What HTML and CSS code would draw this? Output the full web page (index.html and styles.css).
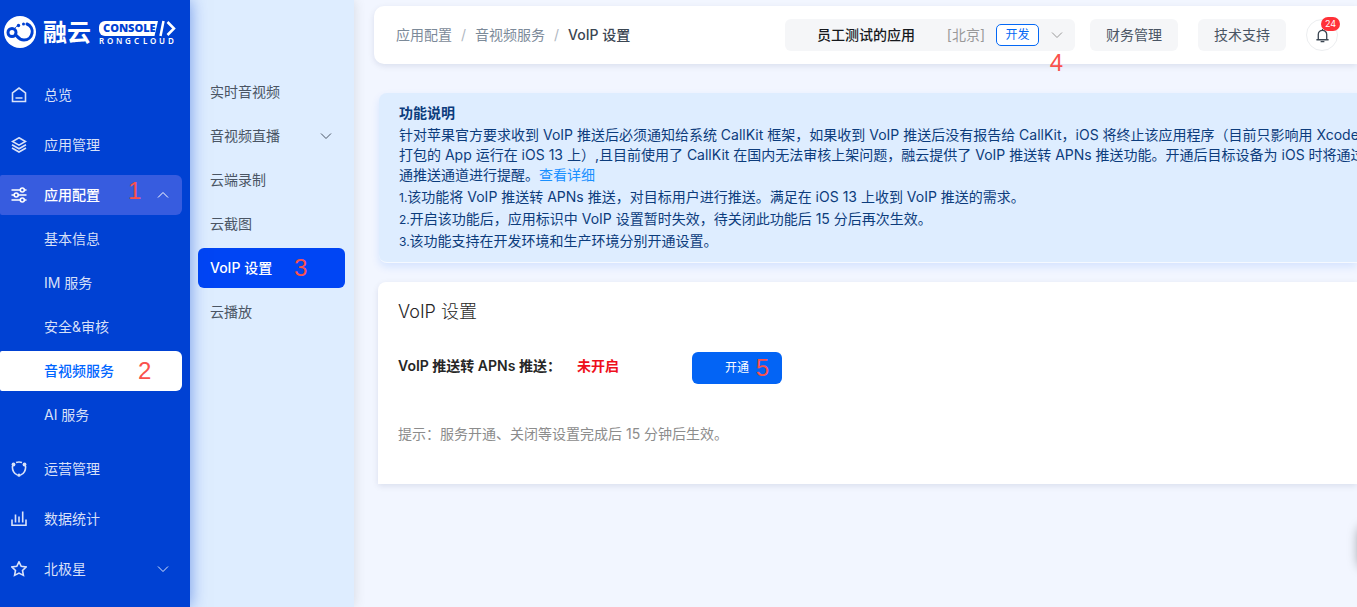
FILE: index.html
```html
<!DOCTYPE html>
<html lang="zh-CN">

<head>
	<meta charset="utf-8">
	<meta name="viewport" content="width=device-width, initial-scale=1">
	<title>VoIP 设置</title>
	<link rel="stylesheet" href="styles.css">
</head>

<body>
	<div class="layout">
		<aside class="sidebar">
			<a class="logo" href="#">
				<svg width="184" height="40" viewBox="0 0 184 40">
					<circle cx="20" cy="20" r="16" fill="#fff" />
					<g fill="none" stroke="#0041d3" stroke-linecap="round">
						<circle cx="12" cy="20.500" r="4" stroke-width="3" />
						<path d="M15.500 22.500c2 2 3.500 5.500 8.500 5.500a8.300 8.300 0 0 0 3-16" stroke-width="3" />
						<path d="M14.500 16.500c1.500-1.500 2.500-2.500 3.500-3.300" stroke-width="1" />
					</g>
					<circle cx="18.500" cy="13.500" r="1.700" fill="#0041d3" />
					<circle cx="23.500" cy="12" r="1.500" fill="#0041d3" />
					<text class="logo-name" x="43" y="29">融云</text>
					<path d="M105 9h53l-3.500 15H105a6 6 0 0 1-6-6v-3a6 6 0 0 1 6-6z" fill="#fff" />
					<text class="logo-console" x="103" y="20">CONSOLE</text>
					<path d="M163.500 9l-3 15M167.500 10l6.500 6.500-6.500 6.500" fill="none" stroke="#fff" stroke-width="2.500" />
					<text class="logo-en" x="99 107 116 125 134 143 150 159 168" y="32">RONGCLOUD</text>
				</svg>
			</a>

			<ul class="menu">
				<li>
					<a class="menu-item" href="#">
						<svg class="icon" viewBox="0 0 16 16"><path d="M1.500 5.800L8 1l6.500 4.800v8.700h-13zM4.500 11h7" /></svg>
						<span>总览</span>
					</a>
				</li>
				<li>
					<a class="menu-item" href="#">
						<svg class="icon" viewBox="0 0 16 16"><path d="M8 .8l6.500 3.700L8 8.200 1.500 4.500zM1 7.800l7 4 7-4M1 11l7 4 7-4" /></svg>
						<span>应用管理</span>
					</a>
				</li>
				<li>
					<a class="menu-item open" href="#">
						<svg class="icon" viewBox="0 0 16 16"><path d="M.5 3h8.700M13.500 3h2M.5 8H3M7.300 8h8.200M.5 13h8.700M13.500 13h2" /><circle cx="11.300" cy="3" r="2" /><circle cx="5.200" cy="8" r="2" /><circle cx="11.300" cy="13" r="2" /></svg>
						<span>应用配置</span>
						<svg class="arrow" viewBox="0 0 12 12"><path d="M1 8.500l5-5 5 5" /></svg>
						<b class="step step-1">1</b>
					</a>
					<ul class="submenu">
						<li><a class="menu-item" href="#">基本信息</a></li>
						<li><a class="menu-item" href="#">IM 服务</a></li>
						<li><a class="menu-item" href="#">安全&amp;审核</a></li>
						<li><a class="menu-item current" href="#">音视频服务<b class="step step-2">2</b></a></li>
						<li><a class="menu-item" href="#">AI 服务</a></li>
					</ul>
				</li>
				<li>
					<a class="menu-item" href="#">
						<svg class="icon" viewBox="0 0 16 16"><path d="M5 1.500Q8 .5 11 1.500M1.500 5C1 9 3 13 6.500 14M14.500 5c.5 4-1.500 8-5 9" /><g class="solid"><circle cx="2.500" cy="3.500" r="1.900" /><circle cx="13.500" cy="3.500" r="1.900" /><circle cx="8" cy="14.200" r="1.600" /></g></svg>
						<span>运营管理</span>
					</a>
				</li>
				<li>
					<a class="menu-item" href="#">
						<svg class="icon" viewBox="0 0 16 16"><path d="M1 8.500v5.800h14V8.500M4.500 3.500v8M8 5.500v6M11.700.5v11" /></svg>
						<span>数据统计</span>
					</a>
				</li>
				<li>
					<a class="menu-item" href="#">
						<svg class="icon" viewBox="0 0 16 16"><path d="M8 .8l2.200 4.500 4.900.7-3.600 3.500.9 4.900L8 12.100l-4.400 2.300.9-4.900L.9 6l4.900-.7z" /></svg>
						<span>北极星</span>
						<svg class="arrow" viewBox="0 0 12 12"><path d="M1 3.500l5 5 5-5" /></svg>
					</a>
				</li>
			</ul>
		</aside>

		<nav class="subnav">
			<a href="#">实时音视频</a>
			<a href="#">音视频直播<svg class="arrow" viewBox="0 0 12 12"><path d="M1 3.500l5 5 5-5" /></svg></a>
			<a href="#">云端录制</a>
			<a href="#">云截图</a>
			<a class="current" href="#">VoIP 设置<b class="step step-3">3</b></a>
			<a href="#">云播放</a>
		</nav>

		<main>
			<header class="topbar">
				<div class="breadcrumb">
					<a href="#">应用配置</a>
					<i>/</i>
					<a href="#">音视频服务</a>
					<i>/</i>
					<span>VoIP 设置</span>
				</div>
				<div class="tools">
					<button type="button" class="app-picker">
						<span class="app-name">员工测试的应用</span>
						<span class="region">[北京]</span>
						<span class="env">开发</span>
						<svg class="arrow" viewBox="0 0 12 12"><path d="M1 3.500l5 5 5-5" /></svg>
						<b class="step step-4">4</b>
					</button>
					<button type="button" class="tool">财务管理</button>
					<button type="button" class="tool">技术支持</button>
					<button type="button" class="bell" aria-label="消息">
						<svg viewBox="0 0 16 16"><path d="M1.500 12.500h13M3.500 12.500V7a4.500 4.500 0 0 1 9 0v5.500M8 2.500V1M6 14.500h4" /></svg>
						<span class="count">24</span>
					</button>
				</div>
			</header>

			<section class="notice">
				<h2>功能说明</h2>
				<p>
					针对苹果官方要求收到 VoIP 推送后必须通知给系统 CallKit 框架，如果收到 VoIP 推送后没有报告给 CallKit，iOS 将终止该应用程序（目前只影响用 Xcode<br>
					打包的 App 运行在 iOS 13 上）,且目前使用了 CallKit 在国内无法审核上架问题，融云提供了 VoIP 推送转 APNs 推送功能。开通后目标设备为 iOS 时将通过<br>
					通推送通道进行提醒。<a href="#">查看详细</a>
				</p>
				<ul>
					<li><small>1.</small>该功能将 VoIP 推送转 APNs 推送，对目标用户进行推送。满足在 iOS 13 上收到 VoIP 推送的需求。</li>
					<li><small>2.</small>开启该功能后，应用标识中 VoIP 设置暂时失效，待关闭此功能后 15 分后再次生效。</li>
					<li><small>3.</small>该功能支持在开发环境和生产环境分别开通设置。</li>
				</ul>
			</section>

			<section class="card">
				<h1>VoIP 设置</h1>
				<div class="setting">
					<span>VoIP 推送转 APNs 推送：</span>
					<span class="off">未开启</span>
					<button type="button" class="primary">开通<b class="step step-5">5</b></button>
				</div>
				<p class="hint">提示：服务开通、关闭等设置完成后 15 分钟后生效。</p>
			</section>
		</main>
	</div>

	<div class="float-tool"></div>
</body>

</html>
```
FILE: styles.css
```css
* {
	box-sizing: border-box;
}

body {
	margin: 0;
	background-color: #f2f6ff;
	font-family: Inter, "Noto Sans CJK SC", sans-serif;
	font-size: 14px;
	line-height: 20px;
	color: #262626;
	overflow: hidden;
}

h1, h2, p, ul {
	margin: 0;
	padding: 0;
}

ul {
	list-style: none;
}

a {
	color: inherit;
	text-decoration: none;
}

button {
	border: none;
	padding: 0;
	font: inherit;
	cursor: pointer;
}

svg {
	fill: none;
	stroke: currentColor;
	flex: none;
}

.layout {
	display: flex;
	min-height: 100vh;
}

/* left menu */
.sidebar {
	flex: none;
	width: 190px;
	padding: 12px 8px 0 0;
	background-color: #0041d3;
	color: rgba(255, 255, 255, 0.85);
	box-shadow: 0 0 16px rgba(0, 65, 211, 0.5);
	position: relative;
	z-index: 2;
}

.logo {
	display: block;
	height: 63px;
}

.logo svg {
	display: block;
	stroke: none;
}

.logo-name {
	fill: #fff;
	font-size: 24px;
	font-weight: 600;
}

.logo-console {
	fill: #0041d3;
	font-family: "Open Sans", "Noto Sans", sans-serif;
	font-size: 11px;
	font-weight: 800;
}

.logo-en {
	fill: #fff;
	font-family: "Noto Sans", sans-serif;
	font-size: 8px;
	font-weight: 600;
}

.menu {
	display: flex;
	flex-direction: column;
	gap: 10px;
}

.menu-item {
	display: flex;
	align-items: center;
	height: 40px;
	padding: 0 13px 0 11px;
	border-radius: 2px 6px 6px 2px;
	position: relative;
}

.icon {
	width: 16px;
	height: 16px;
	margin-right: 17px;
	stroke-width: 1.6;
}

.icon .solid {
	fill: currentColor;
	stroke: none;
}

.arrow {
	width: 12px;
	height: 12px;
	margin-left: auto;
}

.menu-item.open {
	background-color: #375cdf;
	color: #fff;
	font-weight: 500;
}

.submenu {
	display: flex;
	flex-direction: column;
	gap: 4px;
	padding: 4px 0;
}

.submenu .menu-item {
	padding-left: 44px;
}

.submenu .current {
	background-color: #fff;
	color: #0066ff;
	font-weight: 500;
}

/* second level menu */
.subnav {
	flex: none;
	width: 164px;
	padding: 72px 9px 0 8px;
	display: flex;
	flex-direction: column;
	gap: 4px;
	background-color: #deedff;
	color: #4a5564;
	box-shadow: 0 0 12px rgba(0, 0, 0, 0.12);
	position: relative;
	z-index: 1;
}

.subnav a {
	display: flex;
	align-items: center;
	height: 40px;
	padding: 0 13px 0 12px;
	border-radius: 6px;
	position: relative;
}

.subnav .current {
	background-color: #0045f4;
	color: #fff;
	font-weight: 500;
}

main {
	flex: 1;
	min-width: 0;
	padding: 6px 0 0 20px;
}

/* top bar */
.topbar {
	display: flex;
	justify-content: space-between;
	align-items: center;
	height: 58px;
	padding: 0 19px 0 22px;
	background-color: #fff;
	border-radius: 10px 0 0 10px;
	box-shadow: 0 2px 6px rgba(0, 20, 80, 0.1);
}

.breadcrumb {
	display: flex;
	gap: 9px;
	color: #7c8a99;
}

.breadcrumb i {
	font-style: normal;
	color: #b0b8c2;
}

.breadcrumb span {
	color: #3b4652;
	font-weight: 500;
}

.tools {
	display: flex;
	gap: 20px;
}

.tools button {
	height: 32px;
	border-radius: 6px;
	background-color: #f5f6f8;
	color: #4a5564;
}

.tools .app-picker {
	display: flex;
	align-items: center;
	width: 290px;
	padding: 0 12px 0 32px;
	margin-right: -5px;
	position: relative;
}

.app-name {
	color: #16191d;
	font-weight: 500;
}

.region {
	margin: 0 11px 0 auto;
	color: #999;
}

.env {
	width: 43px;
	border: 1px solid #0468f5;
	border-radius: 5px;
	background-color: #fff;
	color: #0468f5;
	font-size: 12px;
}

.app-picker .arrow {
	margin-left: 12px;
	color: #999;
}

.tool {
	width: 88px;
}

.tools .bell {
	display: flex;
	align-items: center;
	justify-content: center;
	width: 32px;
	border: 1px solid #eceef0;
	border-radius: 50%;
	background-color: #fff;
	color: #3b4652;
	position: relative;
}

.bell svg {
	width: 15px;
	height: 15px;
	stroke-width: 1.4;
}

.count {
	position: absolute;
	top: -3px;
	right: -3px;
	width: 19px;
	border-radius: 7px;
	background-color: #ff3138;
	color: #fff;
	font-size: 9px;
	line-height: 14px;
}

/* description */
.notice {
	margin: 29px 0 0 5px;
	padding: 8px 0 10px 20px;
	border-bottom: 1px solid #f5f9ff;
	border-radius: 8px 0 0 8px;
	background-color: #deedff;
	color: #0c3c7c;
	box-shadow: 0 4px 8px rgba(0, 100, 255, 0.12);
	white-space: nowrap;
	overflow: hidden;
}

.notice h2 {
	font-size: 14px;
	line-height: 24px;
}

.notice p {
	margin-bottom: 1px;
}

.notice p a {
	color: #1890ff;
}

.notice li {
	line-height: 22px;
}

.notice small {
	font-size: 12px;
	line-height: 12px;
}

/* VoIP settings */
.card {
	margin: 19px 0 0 4px;
	padding: 18px 20px 40px;
	border-radius: 8px 0 0 0;
	background-color: #fff;
	box-shadow: 0 2px 6px rgba(0, 20, 80, 0.1);
}

.card h1 {
	font-size: 18px;
	line-height: 24px;
	font-weight: 300;
}

.setting {
	display: grid;
	grid-template-columns: 179px 115px 90px;
	margin-top: 28px;
	line-height: 28px;
	font-weight: 600;
}

.off {
	color: #ee0f1b;
}

.primary {
	height: 32px;
	border-radius: 6px;
	background-color: #0364f5;
	color: #fff;
	font-size: 12px;
	font-weight: 400;
	position: relative;
}

.hint {
	margin-top: 40px;
	color: #8c8c8c;
}

/* step numbers */
.step {
	position: absolute;
	top: 50%;
	margin-top: -14px;
	color: #fa514c;
	font-family: "Liberation Sans", sans-serif;
	font-size: 24px;
	line-height: 28px;
	font-weight: 400;
}

.step-1 {
	left: 128px;
	margin-top: -18px;
}

.step-2 {
	left: 138px;
}

.step-3 {
	left: 96px;
}

.step-4 {
	right: 12px;
	margin-top: 14px;
}

.step-5 {
	right: 13px;
}

.float-tool {
	position: fixed;
	right: -42px;
	bottom: 40px;
	width: 40px;
	height: 40px;
	border-radius: 6px;
	box-shadow: 0 0 12px rgba(0, 0, 0, 0.4);
}
```
